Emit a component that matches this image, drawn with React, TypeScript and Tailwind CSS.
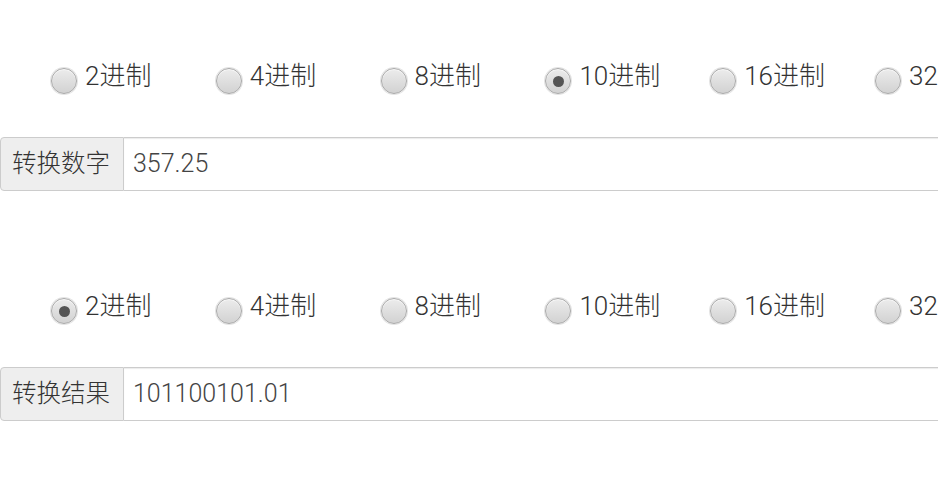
const BASES = ['2', '4', '8', '10', '16', '32']

function Radio({ checked }: { checked: boolean }) {
  return (
    <span className="relative flex h-[26px] w-[26px] shrink-0 items-center justify-center rounded-full border border-[#a9a9a9] bg-gradient-to-b from-[#ececec] to-[#d2d2d2] shadow-[0_0_0_1px_#e4e4e4,inset_0_1px_1px_rgba(255,255,255,0.7)]">
      {checked && <span className="h-[11px] w-[11px] rounded-full bg-[#555]" />}
    </span>
  )
}

function BaseRow({ selected }: { selected: string }) {
  return (
    <div className="flex pl-[51px] whitespace-nowrap">
      {BASES.map(b => (
        <label key={b} className="flex w-[164.8px] shrink-0 items-center gap-[8px]">
          <Radio checked={b === selected} />
          <span className="-mt-[11px] text-[26px] font-light leading-[30px] text-[#333]">{b}进制</span>
        </label>
      ))}
    </div>
  )
}

function Field({ label, value }: { label: string; value: string }) {
  return (
    <div className="flex h-[54px] w-[1000px] shrink-0">
      <div className="flex w-[124px] items-center rounded-l-[4px] border border-[#ccc] bg-[#eee] pl-[11px] text-[24.5px] font-light text-[#333]">
        {label}
      </div>
      <div className="flex flex-1 items-center border border-l-0 border-[#ccc] bg-white pl-[9px] text-[25px] font-light text-[#444] shadow-[inset_0_1px_1px_rgba(0,0,0,0.08)]">
        {value}
      </div>
    </div>
  )
}

export default function App() {
  return (
    <main
      className="h-[496px] w-[938px] overflow-hidden bg-white"
      style={{ fontFamily: "Roboto, 'Noto Sans CJK SC', sans-serif" }}
    >
      <div className="flex flex-col pt-[68px]">
        <BaseRow selected="10" />
        <div className="mt-[43px]">
          <Field label="转换数字" value="357.25" />
        </div>
        <div className="mt-[107px]">
          <BaseRow selected="2" />
        </div>
        <div className="mt-[43px]">
          <Field label="转换结果" value="101100101.01" />
        </div>
      </div>
    </main>
  )
}
